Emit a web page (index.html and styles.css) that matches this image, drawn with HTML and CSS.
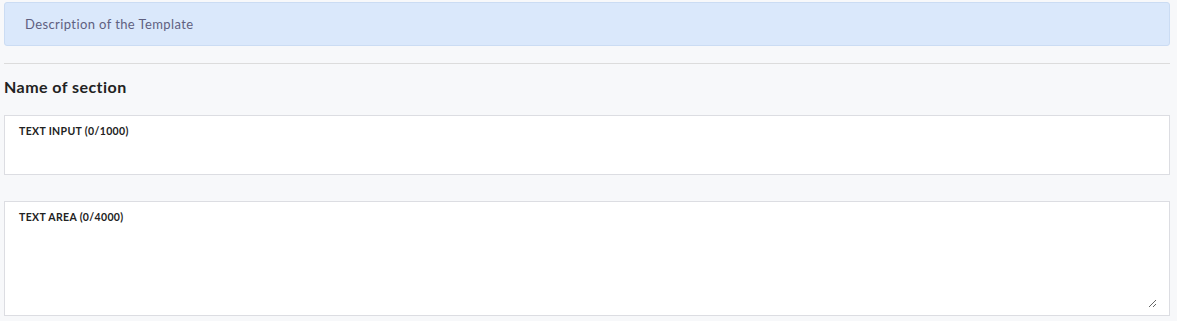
FILE: index.html
```html
<!DOCTYPE html>
<html lang="en">
<head>
    <meta charset="UTF-8">
    <meta name="viewport" content="width=device-width, initial-scale=1.0">
    <title>Template</title>
    <link rel="stylesheet" href="styles.css">
</head>
<body>
    <div class="page">
        <div class="alert">Description of the Template</div>
        <hr class="divider">
        <h2 class="section-title">Name of section</h2>

        <div class="field field-input">
            <label class="field-label" for="text-input">TEXT INPUT (0/1000)</label>
            <input type="text" id="text-input" class="field-control">
        </div>

        <div class="field field-area">
            <label class="field-label" for="text-area">TEXT AREA (0/4000)</label>
            <textarea id="text-area" class="field-control field-textarea"></textarea>
        </div>
    </div>
</body>
</html>
```

FILE: styles.css
```css
body {
    margin: 0;
    font-family: Lato, "Noto Sans", sans-serif;
    background-color: #f7f8fa;
    color: #222;
}

.page {
    padding: 2px 7px 0 4px;
}

.alert {
    height: 44px;
    box-sizing: border-box;
    display: flex;
    align-items: center;
    padding: 0 20px;
    background-color: #dae8fb;
    border: 1px solid #cbdcf3;
    border-radius: 3px;
    color: #5f6080;
    font-size: 13px;
    letter-spacing: 0.4px;
}

.divider {
    border: 0;
    border-top: 1px solid #dcdcdc;
    margin: 17px 0 0 0;
}

.section-title {
    margin: 0;
    height: 51px;
    box-sizing: border-box;
    padding-bottom: 7px;
    display: flex;
    align-items: center;
    font-size: 16px;
    font-weight: 700;
    letter-spacing: 0.45px;
    color: #222;
}

.field {
    background-color: #fff;
    border: 1px solid #dcdde2;
    display: flex;
    flex-direction: column;
    padding: 9px 12px 0 14px;
    box-sizing: border-box;
}

.field-input {
    height: 60px;
    margin-bottom: 26px;
}

.field-area {
    height: 115px;
    padding-bottom: 7px;
}

.field-label {
    font-size: 10.5px;
    font-weight: 700;
    letter-spacing: 0.35px;
    color: #222;
    line-height: 12px;
}

.field-control {
    border: 0;
    outline: none;
    background: transparent;
    font-family: inherit;
    font-size: 13px;
    padding: 0;
}

.field-textarea {
    flex: 1;
    resize: vertical;
}
```
